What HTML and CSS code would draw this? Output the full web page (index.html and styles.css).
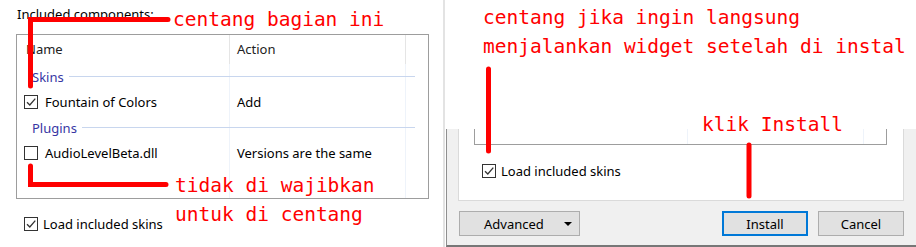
FILE: index.html
```html
<!DOCTYPE html>
<html lang="en">
<head>
    <meta charset="UTF-8">
    <title>Install components</title>
    <link rel="stylesheet" href="styles.css">
</head>
<body>
<div class="page">

    <!-- Left shot: component list -->
    <section class="left">
        <p class="label">Included components:</p>
        <div class="listbox">
            <div class="head">
                <div class="h-name">Name</div>
                <div class="h-act">Action</div>
            </div>
            <div class="group"><span>Skins</span><i></i></div>
            <div class="item">
                <div class="c-name"><span class="check on"><svg viewBox="0 0 12 12"><path d="M2 6.2 L4.8 9 L10.3 2.6"/></svg></span>Fountain of Colors</div>
                <div class="c-act">Add</div>
            </div>
            <div class="group"><span>Plugins</span><i></i></div>
            <div class="item">
                <div class="c-name"><span class="check"></span>AudioLevelBeta.dll</div>
                <div class="c-act">Versions are the same</div>
            </div>
        </div>
        <div class="opt"><span class="check on"><svg viewBox="0 0 12 12"><path d="M2 6.2 L4.8 9 L10.3 2.6"/></svg></span>Load included skins</div>
    </section>

    <div class="divider"></div>

    <!-- Right shot: bottom of the installer dialog -->
    <section class="right">
        <div class="blank"></div>
        <div class="dialog">
            <div class="pane">
                <div class="list-end"></div>
                <div class="opt"><span class="check on"><svg viewBox="0 0 12 12"><path d="M2 6.2 L4.8 9 L10.3 2.6"/></svg></span>Load included skins</div>
            </div>
            <div class="footer">
                <button class="btn adv">Advanced<b class="arrow"></b></button>
                <button class="btn primary">Install</button>
                <button class="btn">Cancel</button>
            </div>
        </div>
    </section>

    <!-- Red annotations -->
    <svg class="marks" width="916" height="247" viewBox="0 0 916 247">
        <path d="M30.5 86 V19.5 H168"/>
        <path d="M30.5 166 V184.5 H166"/>
        <path d="M488.5 69 V151"/>
        <path d="M749 145 V196"/>
    </svg>
    <div class="note n1">centang bagian ini</div>
    <div class="note n2">tidak di wajibkan
untuk di centang</div>
    <div class="note n3">centang jika ingin langsung
menjalankan widget setelah di instal</div>
    <div class="note n4">klik Install</div>
</div>
</body>
</html>
```

FILE: styles.css
```css
* {
    box-sizing: border-box;
}
body {
    margin: 0;
    width: 916px;
    height: 247px;
    overflow: hidden;
    background-color: #fff;
    font-family: "Noto Sans", "Open Sans", sans-serif;
    font-size: 13px;
    color: #000;
}
.page {
    position: relative;
    display: flex;
    height: 247px;
}

/* Left shot */
.left {
    width: 443px;
    padding: 6px 0 0 16px;
}
.label {
    margin: 0 0 0 1px;
    height: 28px;
    line-height: 16px;
}
.listbox {
    width: 413px;
    height: 165px;
    border: 1px solid #9d9d9d;
    background:
        linear-gradient(#eef3fa, #eef3fa) no-repeat 212px 0 / 1px 100%,
        linear-gradient(#eef3fa, #eef3fa) no-repeat 388px 0 / 1px 100%;
}
.head {
    display: flex;
    height: 29px;
    line-height: 29px;
    color: #222;
    background-color: #fff;
}
.h-name {
    width: 213px;
    padding-left: 9px;
    border-right: 1px solid #e5e5e5;
}
.h-act {
    width: 176px;
    padding-left: 7px;
    border-right: 1px solid #e5e5e5;
}
.group {
    display: flex;
    align-items: center;
    height: 25px;
    padding: 0 13px 0 15px;
    color: #3636a3;
}
.group i {
    flex: 1;
    height: 1px;
    margin-left: 5px;
    background-color: #c8d6ee;
}
.item {
    display: flex;
    align-items: center;
    height: 26px;
}
.c-name {
    display: flex;
    align-items: center;
    width: 213px;
    padding-left: 7px;
}
.c-act {
    padding-left: 7px;
}
.check {
    display: inline-flex;
    width: 14px;
    height: 14px;
    margin-right: 7px;
    border: 1px solid #333;
    background-color: #fff;
}
.check svg {
    width: 12px;
    height: 12px;
    fill: none;
    stroke: #333;
    stroke-width: 1.3;
}
.opt {
    display: flex;
    align-items: center;
    height: 16px;
    margin-top: 17px;
    padding-left: 8px;
}
.opt .check {
    margin-right: 5px;
}

.divider {
    width: 2px;
    background-color: #e3e3e3;
}

/* Right shot */
.right {
    width: 471px;
    display: flex;
    flex-direction: column;
}
.blank {
    height: 129px;
}
.dialog {
    height: 118px;
    margin-left: 1px;
    border-left: 1px solid #8f8f8f;
    border-bottom: 2px solid #777;
    background-color: #f0f0f0;
}
.pane {
    height: 72px;
    margin: 0 12px 0 11px;
    border: 1px solid #dadada;
    border-top: none;
    background-color: #fff;
}
.list-end {
    width: 413px;
    height: 16px;
    margin-left: 15px;
    border: 1px solid #9d9d9d;
    border-top: none;
    background:
        linear-gradient(#eef3fa, #eef3fa) no-repeat 212px 0 / 1px 100%,
        linear-gradient(#eef3fa, #eef3fa) no-repeat 388px 0 / 1px 100%;
}
.pane .opt {
    margin-top: 18px;
    padding-left: 23px;
}
.footer {
    display: flex;
    gap: 10px;
    padding: 10px 12px 0 12px;
}
.btn {
    height: 25px;
    width: 86px;
    padding: 0;
    font: inherit;
    color: #000;
    background-color: #e1e1e1;
    border: 1px solid #adadad;
}
.btn.adv {
    width: 121px;
    margin-right: auto;
    display: flex;
    align-items: center;
    justify-content: space-between;
    padding: 0 7px 0 24px;
}
.arrow {
    width: 0;
    height: 0;
    border-left: 4px solid transparent;
    border-right: 4px solid transparent;
    border-top: 4px solid #000;
}
.btn.primary {
    border: 2px solid #0078d7;
}

/* Annotations */
.marks {
    position: absolute;
    left: 0;
    top: 0;
    pointer-events: none;
}
.marks path {
    fill: none;
    stroke: #f00;
    stroke-width: 5;
    stroke-linecap: round;
}
.note {
    position: absolute;
    font-family: "DejaVu Sans Mono", monospace;
    font-size: 19.5px;
    line-height: 29px;
    color: #f00;
    white-space: pre;
}
.n1 {
    left: 173px;
    top: 5px;
}
.n2 {
    left: 175px;
    top: 171px;
}
.n3 {
    left: 483px;
    top: 3px;
}
.n4 {
    left: 702px;
    top: 110px;
}
```
